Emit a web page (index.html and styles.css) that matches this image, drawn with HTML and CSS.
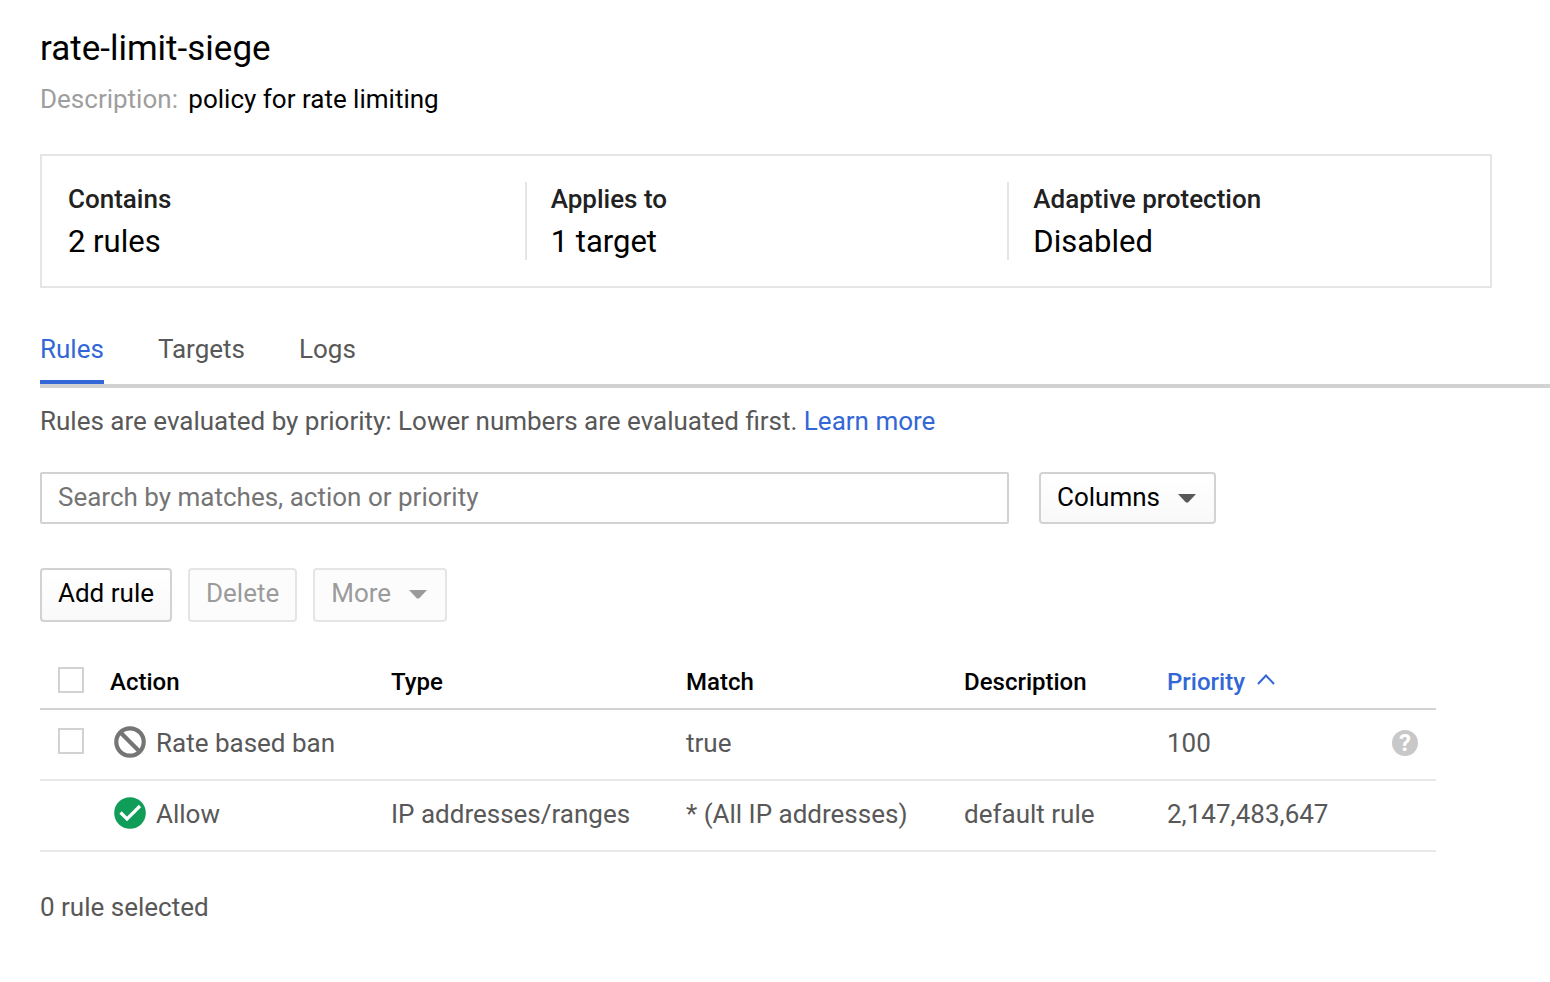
FILE: index.html
```html
<!DOCTYPE html>
<html lang="en">

<head>
  <meta charset="UTF-8" />
  <meta name="viewport" content="width=device-width, initial-scale=1.0" />
  <title>rate-limit-siege</title>
  <link rel="stylesheet" href="styles.css">
</head>

<body>
  <header class="policy-header">
    <h1>rate-limit-siege</h1>
    <p><span class="label">Description:</span> policy for rate limiting</p>
  </header>

  <dl class="summary">
    <div class="summary-item">
      <dt>Contains</dt>
      <dd>2 rules</dd>
    </div>
    <div class="summary-item">
      <dt>Applies to</dt>
      <dd>1 target</dd>
    </div>
    <div class="summary-item">
      <dt>Adaptive protection</dt>
      <dd>Disabled</dd>
    </div>
  </dl>

  <nav class="tabs">
    <a href="#rules" class="tab active">Rules</a>
    <a href="#targets" class="tab">Targets</a>
    <a href="#logs" class="tab">Logs</a>
  </nav>

  <main id="rules">
    <p class="hint">Rules are evaluated by priority: Lower numbers are evaluated first. <a href="#learn">Learn more</a></p>

    <div class="search-row">
      <input type="text" class="search" placeholder="Search by matches, action or priority" aria-label="Search rules" />
      <button type="button" class="btn columns-btn" aria-haspopup="true">Columns
        <svg class="caret" width="18" height="9" viewBox="0 0 18 9" aria-hidden="true"><path d="M0 0h18l-8 8.500H8z" fill="currentColor" /></svg>
      </button>
    </div>

    <div class="actions">
      <button type="button" class="btn">Add rule</button>
      <button type="button" class="btn" disabled>Delete</button>
      <button type="button" class="btn" aria-haspopup="true" disabled>More
        <svg class="caret" width="18" height="9" viewBox="0 0 18 9" aria-hidden="true"><path d="M0 0h18l-8 8.500H8z" fill="currentColor" /></svg>
      </button>
    </div>

    <table class="rules-table">
      <colgroup>
        <col class="col-check">
        <col class="col-action">
        <col class="col-type">
        <col class="col-match">
        <col class="col-desc">
        <col class="col-priority">
        <col class="col-help">
      </colgroup>
      <thead>
        <tr>
          <th><input type="checkbox" aria-label="Select all rules" /></th>
          <th>Action</th>
          <th>Type</th>
          <th>Match</th>
          <th>Description</th>
          <th aria-sort="ascending">
            <button type="button" class="sort">Priority
              <svg width="18" height="12" viewBox="0 0 18 12" aria-hidden="true"><path d="M1 10L9 1.500l8 8.500" fill="none" stroke="currentColor" stroke-width="2" /></svg>
            </button>
          </th>
          <th></th>
        </tr>
      </thead>
      <tbody>
        <tr>
          <td><input type="checkbox" aria-label="Select rule 100" /></td>
          <td>
            <div class="action">
              <svg width="32" height="32" viewBox="0 0 32 32" aria-hidden="true"><circle cx="16" cy="16" r="13.700" fill="none" stroke="#757575" stroke-width="4.200" /><path d="M6.500 6.500l19 19" stroke="#757575" stroke-width="4.200" /></svg>
              Rate based ban
            </div>
          </td>
          <td></td>
          <td>true</td>
          <td></td>
          <td>100</td>
          <td><button type="button" class="help" aria-label="Help">?</button></td>
        </tr>
        <tr>
          <td></td>
          <td>
            <div class="action">
              <svg width="32" height="32" viewBox="0 0 32 32" aria-hidden="true"><circle cx="16" cy="16" r="15.800" fill="#0f9d58" /><path d="M6.500 15.500l6.500 6.500L26 9" fill="none" stroke="#fff" stroke-width="3.200" /></svg>
              Allow
            </div>
          </td>
          <td>IP addresses/ranges</td>
          <td>* (All IP addresses)</td>
          <td>default rule</td>
          <td>2,147,483,647</td>
          <td></td>
        </tr>
      </tbody>
    </table>

    <p class="selected">0 rule selected</p>
  </main>
</body>

</html>
```
FILE: styles.css
```css
* {
  box-sizing: border-box;
}

body {
  margin: 0;
  padding: 27px 0 0 40px;
  font-family: Roboto, sans-serif;
  font-size: 26px;
  line-height: 32px;
  background-color: #fff;
  color: #585858;
}

h1,
p,
dl,
dd {
  margin: 0;
}

a {
  color: #3367d6;
  text-decoration: none;
}

button,
input {
  font: inherit;
}

.policy-header {
  color: #000;
}

.policy-header h1 {
  font-size: 35px;
  font-weight: 400;
  line-height: 44px;
  margin-bottom: 12px;
}

.policy-header .label {
  color: #9e9e9e;
  margin-right: 4px;
}

.summary {
  display: grid;
  grid-template-columns: repeat(3, 1fr);
  margin: 39px 58px 0 0;
  padding: 26px 0;
  border: 2px solid #e5e5e5;
}

.summary-item {
  padding: 0 24px;
  border-left: 2px solid #e5e5e5;
}

.summary-item:first-child {
  border-left-color: transparent;
}

.summary dt {
  color: #212121;
  font-weight: 500;
  line-height: 34px;
}

.summary dd {
  color: #000;
  font-size: 31px;
  line-height: 36px;
  padding-top: 8px;
}

.tabs {
  display: flex;
  gap: 54px;
  margin-top: 34px;
  border-bottom: 4px solid #d2d2d2;
}

.tab {
  padding: 11px 0 15px;
  border-bottom: 4px solid transparent;
  color: #585858;
}

.tab.active {
  color: #3367d6;
  border-bottom-color: #3367d6;
}

.hint {
  margin-top: 17px;
}

.search-row {
  display: flex;
  gap: 30px;
  margin: 35px 334px 0 0;
}

.search {
  flex: 1;
  min-width: 0;
  height: 52px;
  padding: 0 16px 2px;
  border: 2px solid #d2d2d2;
  border-radius: 2px;
  color: #000;
}

.search::placeholder {
  color: #757575;
  opacity: 1;
}

.btn {
  display: inline-flex;
  align-items: center;
  justify-content: center;
  height: 54px;
  padding: 0 16px 4px;
  border: 2px solid #d2d2d2;
  border-radius: 4px;
  background: linear-gradient(#fff, #f9f9f9);
  color: #000;
}

.btn:disabled {
  border-color: #e5e5e5;
  background: #fcfcfc;
  color: #9b9b9b;
}

.columns-btn {
  height: 52px;
  padding-bottom: 2px;
}

.caret {
  margin: 2px 2px 0 18px;
  color: #585858;
}

.btn:disabled .caret {
  color: #9b9b9b;
}

.actions {
  display: flex;
  gap: 16px;
  margin-top: 44px;
}

.rules-table {
  width: calc(100% - 114px);
  margin-top: 32px;
  table-layout: fixed;
  border-spacing: 0;
}

.col-check {
  width: 52px;
}

.col-action {
  width: 281px;
}

.col-type {
  width: 295px;
}

.col-match {
  width: 278px;
}

.col-desc {
  width: 203px;
}

.col-priority {
  width: 225px;
}

.col-help {
  width: 62px;
}

.rules-table th,
.rules-table td {
  height: 71px;
  padding: 0 0 3px 18px;
  text-align: left;
  white-space: nowrap;
  border-bottom: 2px solid #e8e8e8;
}

.rules-table th {
  height: 56px;
  padding-top: 2px;
  padding-bottom: 0;
  color: #000;
  font-size: 24px;
  font-weight: 500;
  border-bottom-color: #d2d2d2;
}

.rules-table input {
  display: block;
  appearance: none;
  width: 26px;
  height: 26px;
  margin: 0 0 5px;
  border: 2px solid #d2d2d2;
  background: #fff;
}

.sort {
  display: flex;
  align-items: center;
  gap: 12px;
  padding: 0;
  border: 0;
  background: none;
  color: #3367d6;
}

.sort svg {
  margin-bottom: 4px;
}

.action {
  display: flex;
  align-items: center;
  gap: 10px;
  padding-left: 4px;
}

.action svg {
  margin-bottom: 3px;
}

.help {
  display: flex;
  align-items: center;
  justify-content: center;
  width: 26px;
  height: 26px;
  padding: 0;
  border: 0;
  border-radius: 50%;
  background: #c8c8c8;
  color: #fff;
  font-size: 24px;
  font-weight: 700;
  line-height: 26px;
}

.selected {
  margin-top: 39px;
}
```
